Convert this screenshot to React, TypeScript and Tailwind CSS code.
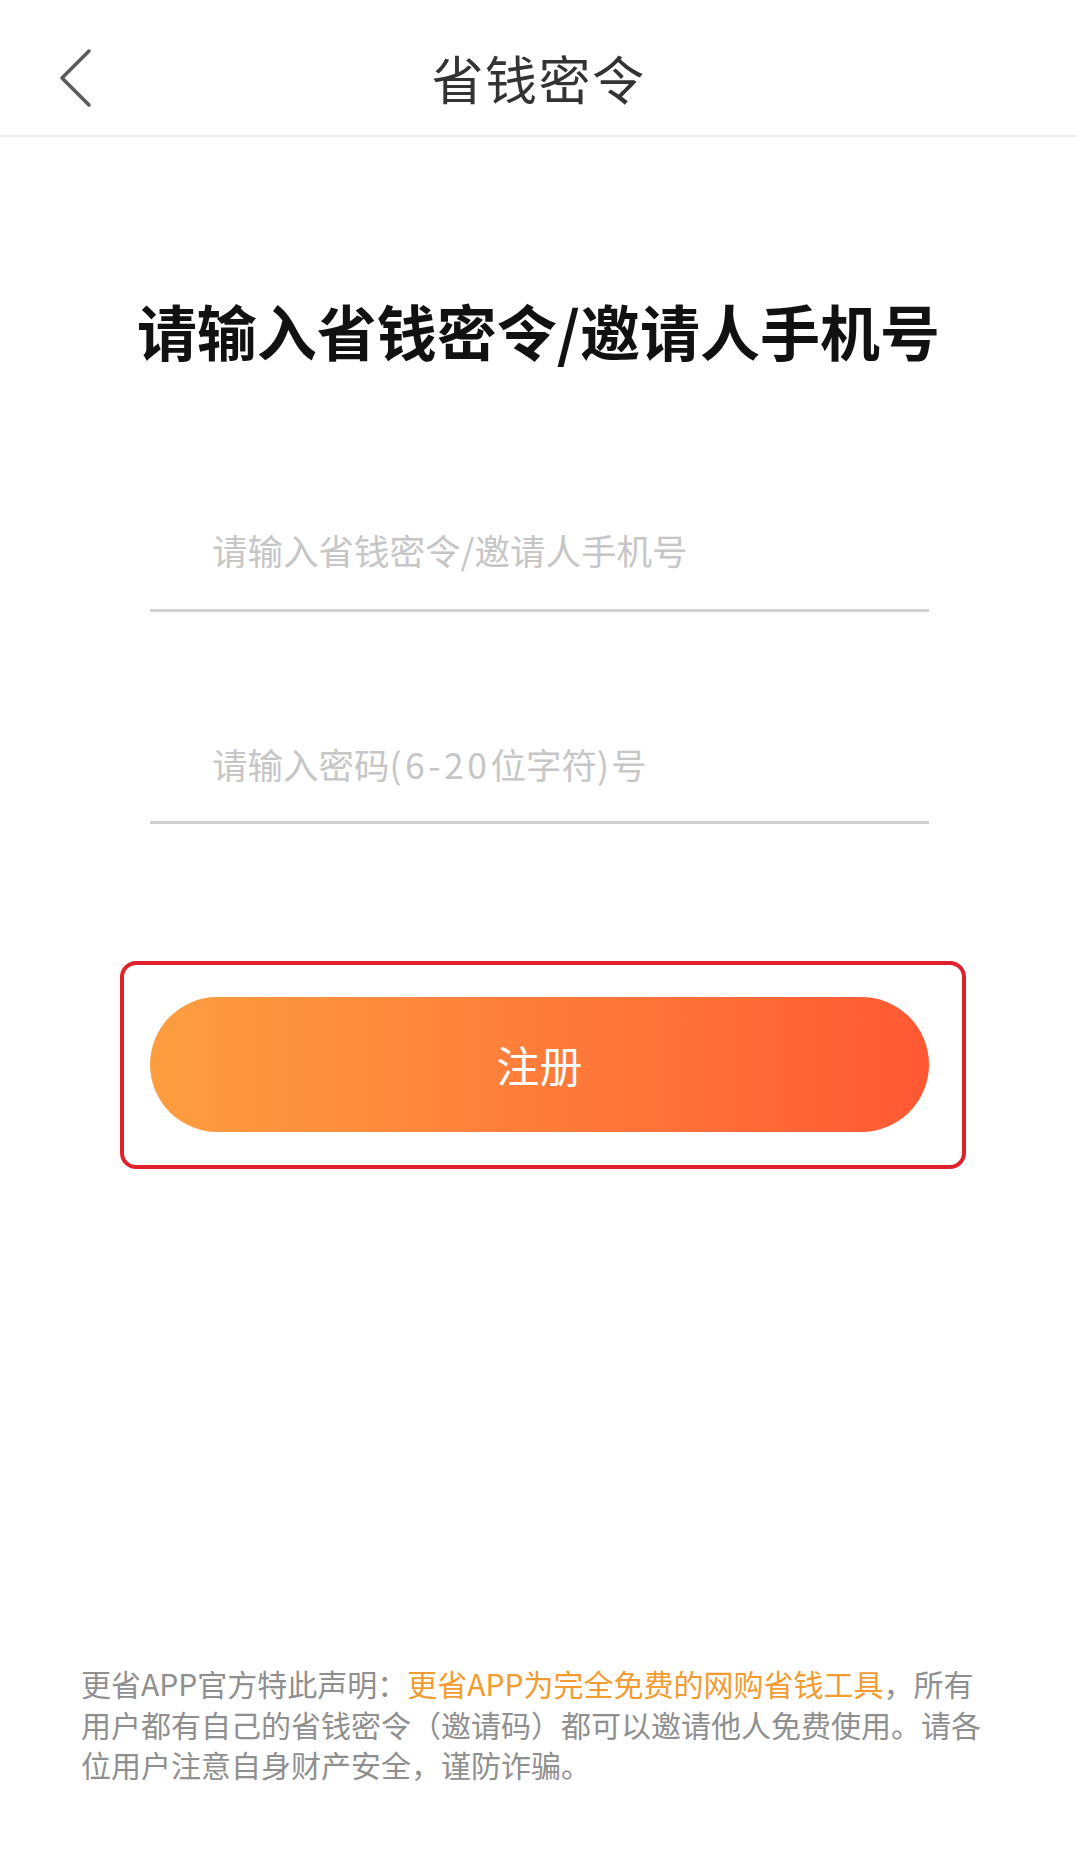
import React from "react";

export default function App() {
  const font = { fontFamily: '"Noto Sans CJK SC", "Noto Sans", sans-serif' };
  return (
    <div className="w-[1077px] min-h-[1865px] bg-white" style={font}>
      {/* Header */}
      <div className="relative flex h-[137px] items-center justify-center border-b-2 border-[#eeeeee]">
        <svg
          className="absolute left-[56px] top-[47px]"
          width="40"
          height="62"
          viewBox="0 0 40 62"
          fill="none"
        >
          <path d="M33 4 L6 31 L33 58" stroke="#5a5a5a" strokeWidth="3.5" strokeLinecap="round" strokeLinejoin="round" />
        </svg>
        <span className="pt-[20px] text-[52px] leading-none text-[#333333] font-normal tracking-[1.5px]">省钱密令</span>
      </div>

      {/* Heading */}
      <h1 className="mt-[163px] text-center text-[60px] font-bold leading-none text-[#111111]">
        请输入省钱密令/邀请人手机号
      </h1>

      {/* Inputs */}
      <div className="ml-[150px] w-[779px]">
        <div className="mt-[172px] border-b-[3px] border-[#d0d0d0] pb-[41px] pl-[62px] text-[35.5px] leading-none text-[#c6c6c6]">
          请输入省钱密令/邀请人手机号
        </div>
        <div className="mt-[134px] border-b-[3px] border-[#d0d0d0] pb-[40px] pl-[62px] text-[35.5px] leading-none text-[#c6c6c6]">
          请输入密码<span className="tracking-[3.5px]">(6-20</span>位字符<span className="tracking-[2px]">)</span>号
        </div>
      </div>

      {/* Button with highlight */}
      <div className="ml-[120px] mt-[137px] w-[846px] rounded-[16px] border-4 border-[#e0202a] pb-[33px] pl-[26px] pr-[33px] pt-[32px]">
        <div className="flex h-[135px] w-[779px] items-center justify-center rounded-full bg-gradient-to-r from-[#fd9e40] via-[#fe7c3a] to-[#ff5834]">
          <span className="text-[43px] leading-none text-white">注册</span>
        </div>
      </div>

      {/* Footer notice */}
      <p className="ml-[81px] mt-[494px] w-[920px] text-[30px] leading-[40.5px] text-[#8f8f8f]">
        更省APP官方特此声明：<span className="text-[#f39b2f]">更省APP为完全免费的网购省钱工具</span>，所有
        <br />
        用户都有自己的省钱密令（邀请码）都可以邀请他人免费使用。请各
        <br />
        位用户注意自身财产安全，谨防诈骗。
      </p>
    </div>
  );
}
